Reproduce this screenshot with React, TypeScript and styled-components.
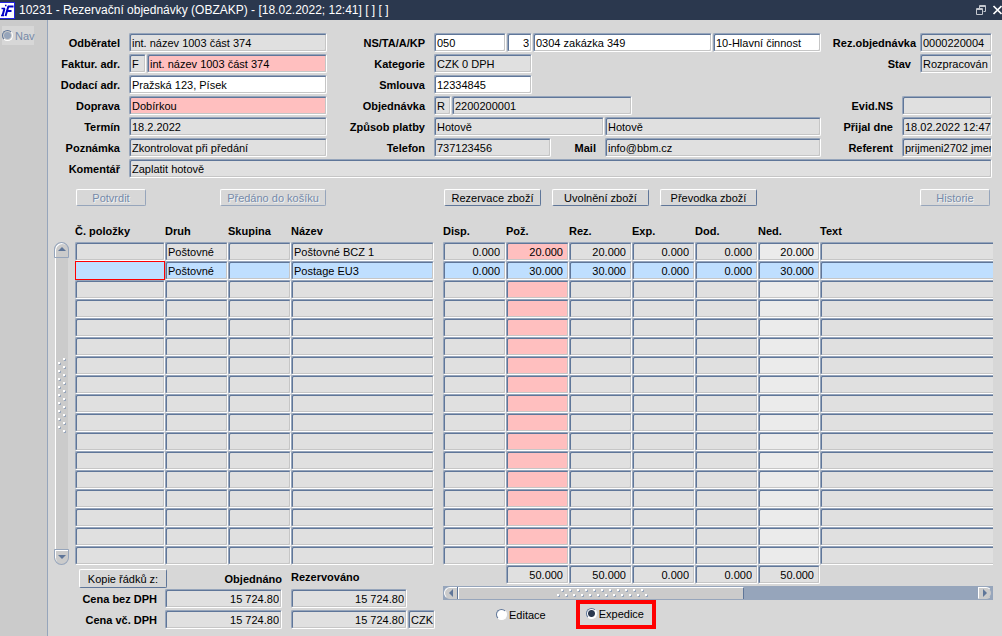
import React, { useState } from "react";
import styled, { createGlobalStyle, css } from "styled-components";

const color = {
  title: "#2b384e",
  nav: "#cbcbcb",
  panel: "#d7d7d7",
  field: "#e0e0e0",
  pale: "#ebebeb",
  pink: "#ffbfbf",
  selected: "#bfdfff",
  line: "#5f7699",
  lineSoft: "#96a5bb",
  shade: "#c6c6c6",
  disabled: "#768aa8",
};

const GlobalStyle = createGlobalStyle`
  *, *::before, *::after { box-sizing: border-box; }
  html, body, #root { height: 100%; }
  body {
    margin: 0;
    background: ${color.panel};
    overflow: hidden;
  }
  body, input, button {
    font-family: "Liberation Sans", Arial, sans-serif;
    font-size: 11px;
    color: #000;
  }
`;

const Window = styled.div`
  min-height: 100%;
  display: flex;
  flex-direction: column;
`;

const TitleBar = styled.header`
  height: 20px;
  flex: none;
  display: flex;
  align-items: center;
  gap: 4px;
  background: ${color.title};
`;

const Title = styled.h1`
  margin: 0;
  flex: 1;
  font-size: 12px;
  font-weight: 400;
  line-height: 20px;
  color: #fff;
  white-space: pre;
`;

const WindowButton = styled.button`
  width: 10px;
  height: 18px;
  margin-left: 2px;
  padding: 0;
  border: 0;
  background: none;
  display: flex;
  align-items: center;
`;

const Main = styled.div`
  flex: 1;
  display: flex;
`;

const Nav = styled.nav`
  width: 48px;
  flex: none;
  padding: 6px 0 0 2px;
  background: ${color.nav};
  border-right: 1px solid ${color.lineSoft};
`;

const NavItem = styled.label`
  display: flex;
  align-items: center;
  gap: 2px;
  width: 32px;
  height: 19px;
  background: ${color.panel};
  color: ${color.disabled};
`;

const Radio = styled.input`
  appearance: none;
  flex: none;
  width: 11px;
  height: 11px;
  margin: 0;
  border: 1px solid;
  border-color: ${color.line} #fff #fff ${color.line};
  border-radius: 50%;
  background: #fff;

  &:checked {
    background: radial-gradient(circle, ${color.title} 0 3px, #fff 4px);
  }

  &:disabled {
    background: radial-gradient(circle, ${color.lineSoft} 0 3px, ${color.nav} 4px);
  }
`;

const Content = styled.main`
  flex: 1;
  min-width: 0;
  padding: 13px 9px 0 0;
`;

const Form = styled.form`
  display: grid;
  grid-template-columns: 279px minmax(0, 1fr) 171px;
  row-gap: 2px;
  margin-right: 1px;
`;

const Stack = styled.div`
  display: grid;
  grid-template-columns: minmax(0, 1fr);
  grid-auto-rows: 19px;
  row-gap: 2px;
`;

const FormRow = styled.div<{ $row?: number; $wide?: boolean }>`
  display: flex;
  gap: 1px;
  height: 19px;
  ${(p) => p.$row && `grid-row: ${p.$row};`}
  ${(p) => p.$wide && "grid-column: 1 / -1;"}
`;

const Label = styled.label<{ $width?: number; $tight?: boolean }>`
  ${(p) => (p.$width ? `width: ${p.$width}px; flex: none;` : "flex: 1;")}
  height: 19px;
  padding: 1px ${(p) => (p.$tight ? 3 : 8)}px 0 0;
  font-weight: 700;
  line-height: 19px;
  text-align: right;
  white-space: nowrap;
`;

const sunken = css`
  border: 1px solid;
  border-color: ${color.lineSoft} #fff #fff ${color.lineSoft};
  border-radius: 2px;
  box-shadow: inset 1px 1px 0 ${color.line}, inset -1px -1px 0 ${color.shade};
`;

const Field = styled.input<{
  $width?: number;
  $tone?: string;
  $right?: boolean;
}>`
  ${sunken}
  ${(p) => (p.$width ? `width: ${p.$width}px; flex: none;` : "flex: 1; width: 0;")}
  min-width: 0;
  height: 19px;
  padding: 0 ${(p) => (p.$right ? 2 : 0)}px 0 2px;
  background: ${(p) => p.$tone ?? color.field};
  text-align: ${(p) => (p.$right ? "right" : "left")};
  outline: none;
`;

const Button = styled.button<{ $width: number; $tall?: boolean }>`
  width: ${(p) => p.$width}px;
  height: ${(p) => (p.$tall ? 19 : 17)}px;
  flex: none;
  padding: 1px 0 0;
  border: 1px solid;
  border-color: #fff ${color.line} ${color.line} #fff;
  border-radius: 2px;
  background: ${color.panel};
  line-height: 14px;
  white-space: nowrap;

  &:disabled {
    border-color: #fff ${color.lineSoft} ${color.lineSoft} #fff;
    color: ${color.disabled};
    text-shadow: 1px 1px 0 #eef2f6;
  }
`;

const Actions = styled.div`
  display: grid;
  grid-template-columns: 250px minmax(0, 1fr) 70px;
  column-gap: 118px;
  margin: 11px 3px 0 28px;
`;

const ActionGroup = styled.div<{ $spread?: boolean }>`
  display: flex;
  gap: 11px;
  ${(p) => p.$spread && "justify-content: space-between;"}
`;

const Panes = styled.div`
  display: flex;
  margin-top: 17px;
`;

const LeftPane = styled.section`
  width: 359px;
  flex: none;
  margin: 0 9px 0 6px;
`;

const RightPane = styled.section`
  flex: 1;
  min-width: 0;
  overflow: hidden;
`;

const VerticalBar = styled.div`
  width: 15px;
  height: 323px;
  flex: none;
  margin: 19px 0 0 6px;
  display: flex;
  flex-direction: column;
  align-items: center;
`;

const Cap = styled.button<{ $end?: boolean }>`
  width: 15px;
  height: 16px;
  flex: none;
  padding: 0;
  display: flex;
  align-items: center;
  justify-content: center;
  border: 1px solid ${color.lineSoft};
  border-radius: ${(p) => (p.$end ? "1px 1px 8px 8px" : "8px 8px 1px 1px")};
  box-shadow: inset 1px 1px 0 #fff;
  background: ${color.nav};
`;

const VerticalThumb = styled.div`
  flex: 1;
  width: 13px;
  padding-bottom: 16px;
  display: flex;
  align-items: center;
  justify-content: center;
  border-left: 1px solid #fff;
  background: ${color.nav};
`;

const Grid = styled.table`
  width: 100%;
  table-layout: fixed;
  border-collapse: collapse;
`;

const HeadCell = styled.th`
  height: 19px;
  padding: 0;
  font-weight: 700;
  line-height: 16px;
  text-align: left;
  vertical-align: top;
  white-space: nowrap;
`;

const Cell = styled.td`
  height: 19px;
  padding: 0;
`;

const CellInput = styled.input<{
  $tone: string;
  $right?: boolean;
  $current?: boolean;
  $open?: boolean;
}>`
  ${sunken}
  display: block;
  width: 100%;
  height: 19px;
  padding: 0 ${(p) => (p.$right ? 5 : 2)}px 0 2px;
  background: ${(p) => p.$tone};
  text-align: ${(p) => (p.$right ? "right" : "left")};
  outline: none;
  ${(p) =>
    p.$open &&
    css`
      border-right: 0;
      border-radius: 2px 0 0 2px;
      box-shadow: inset 1px 1px 0 ${color.line}, inset 0 -1px 0 ${color.shade};
    `}
  ${(p) =>
    p.$current &&
    css`
      border-color: #f00;
      border-radius: 0;
      box-shadow: none;
    `}
`;

const Summary = styled.div`
  display: grid;
  grid-template-columns: 90px 117px 143px;
  row-gap: 2px;

  & > :nth-child(3n) {
    margin-left: 9px;
    margin-right: -9px;
  }
`;

const SummaryHead = styled.div<{ $right?: boolean }>`
  padding-top: ${(p) => (p.$right ? 6 : 4)}px;
  font-weight: 700;
  line-height: 16px;
  text-align: ${(p) => (p.$right ? "right" : "left")};
`;

const SummaryLine = styled.div`
  display: flex;
  gap: 1px;
`;

const CopyButtonSlot = styled.div`
  height: 22px;
  padding: 4px 0 0 4px;
`;

const HorizontalBar = styled.div`
  display: flex;
  height: 14px;
  margin-top: 2px;
  border: 1px solid ${color.lineSoft};
  background: ${color.lineSoft};
`;

const SideCap = styled.button<{ $end?: boolean }>`
  width: 14px;
  flex: none;
  padding: 0;
  display: flex;
  align-items: center;
  justify-content: center;
  border: 1px solid #fff;
  border-right-color: ${(p) => (p.$end ? color.lineSoft : color.nav)};
  border-bottom-color: ${color.nav};
  border-radius: ${(p) => (p.$end ? "0 7px 7px 0" : "7px 0 0 7px")};
  background: ${color.nav};
`;

const Track = styled.div`
  flex: 1;
`;

const HorizontalThumb = styled.div`
  width: 55%;
  height: 12px;
  padding-left: 4px;
  display: flex;
  align-items: center;
  justify-content: center;
  border: 1px solid #fff;
  border-right-color: ${color.line};
  border-bottom: 0;
  box-shadow: -1px 0 0 ${color.line};
  background: ${color.nav};
`;

const Modes = styled.div`
  display: flex;
  align-items: center;
  gap: 30px;
  margin-left: 53px;
`;

const Mode = styled.label`
  display: flex;
  align-items: center;
  gap: 2px;
  line-height: 16px;
`;

const Highlight = styled.div`
  display: flex;
  align-items: center;
  width: 80px;
  height: 29px;
  padding: 0 0 2px 6px;
  border: 4px solid #f00;
`;

function Logo() {
  return (
    <svg width="15" height="17" viewBox="0 0 15 17" aria-hidden="true">
      <rect width="15" height="17" fill="#fff" />
      <path d="M0 .5H15M14.5 0V17M0 16.5H15" stroke="#2424e0" fill="none" />
      <path d="M4.5 6.5L2.5 13.5" stroke="#0000c8" strokeWidth="2" />
      <path d="M1.5 6.5H5M1 13.5H4M5 3.5H6.5" stroke="#0000c8" strokeWidth="1.5" />
      <path d="M8.5 4L5.5 14M8 4.5H13.5M7 9H11.5" stroke="#0000c8" strokeWidth="2" fill="none" />
    </svg>
  );
}

function RestoreIcon() {
  return (
    <svg width="10" height="10" viewBox="0 0 10 10" aria-hidden="true">
      <path d="M3.5 3V.5H9.5V6.5H7.5M3 1.5H10" stroke="#c3c7ce" fill="none" />
      <path d="M.5 3.5H6.5V9.5H.5ZM0 4.5H7" stroke="#c3c7ce" fill="none" />
    </svg>
  );
}

function CloseIcon() {
  return (
    <svg width="10" height="10" viewBox="0 0 10 10" aria-hidden="true">
      <path d="M1.5 1L9.5 9M9.5 1L1.5 9" stroke="#fff" strokeWidth="1.7" />
    </svg>
  );
}

const arrows = {
  up: "M0 5L4 1L8 5Z",
  down: "M0 2L4 6L8 2Z",
  left: "M6 0L2 4L6 8Z",
  right: "M2 0L6 4L2 8Z",
};

function Arrow({ to }: { to: keyof typeof arrows }) {
  return (
    <svg width="8" height="8" viewBox="0 0 8 8" aria-hidden="true">
      <path d={arrows[to]} fill={color.line} />
    </svg>
  );
}

function Grip({ vertical }: { vertical?: boolean }) {
  const dots = Array.from({ length: vertical ? 19 : 23 }, (_, i) => {
    const along = i * 4;
    const across = i % 2 ? 0 : 5;
    return vertical ? [across, along] : [along, across];
  });
  return (
    <svg width={vertical ? 9 : 92} height={vertical ? 76 : 9} aria-hidden="true">
      {dots.map(([x, y]) => (
        <g key={`${x}-${y}`}>
          <rect x={x + 1} y={y + 1} width="2" height="2" fill={color.lineSoft} />
          <rect x={x} y={y} width="2" height="2" fill="#fff" />
        </g>
      ))}
    </svg>
  );
}

type Column = { key: string; title: string; width?: number; right?: boolean; tone?: string };

const leftColumns: Column[] = [
  { key: "no", title: "Č. položky", width: 90 },
  { key: "kind", title: "Druh", width: 63 },
  { key: "group", title: "Skupina", width: 63 },
  { key: "name", title: "Název", width: 143 },
];

const rightColumns: Column[] = [
  { key: "disp", title: "Disp.", width: 63, right: true },
  { key: "poz", title: "Pož.", width: 63, right: true, tone: color.pink },
  { key: "rez", title: "Rez.", width: 63, right: true },
  { key: "exp", title: "Exp.", width: 63, right: true },
  { key: "dod", title: "Dod.", width: 63, right: true },
  { key: "ned", title: "Ned.", width: 62, right: true, tone: color.pale },
  { key: "text", title: "Text" },
];

const items: Record<string, string>[] = [
  { kind: "Poštovné", name: "Poštovné BCZ 1", disp: "0.000", poz: "20.000", rez: "20.000", exp: "0.000", dod: "0.000", ned: "20.000" },
  { kind: "Poštovné", name: "Postage EU3", disp: "0.000", poz: "30.000", rez: "30.000", exp: "0.000", dod: "0.000", ned: "30.000" },
];

const totals: Record<string, string> = {
  poz: "50.000",
  rez: "50.000",
  exp: "0.000",
  dod: "0.000",
  ned: "50.000",
};

const ROWS = 17;
const SELECTED = 1;

function ItemGrid({ columns, withTotals }: { columns: Column[]; withTotals?: boolean }) {
  return (
    <Grid>
      <colgroup>
        {columns.map((c) => (
          <col key={c.key} width={c.width} />
        ))}
      </colgroup>
      <thead>
        <tr>
          {columns.map((c) => (
            <HeadCell key={c.key} scope="col">{c.title}</HeadCell>
          ))}
        </tr>
      </thead>
      <tbody>
        {Array.from({ length: ROWS }, (_, row) => (
          <tr key={row}>
            {columns.map((c) => (
              <Cell key={c.key}>
                <CellInput
                  aria-label={`${c.title} ${row + 1}`}
                  defaultValue={items[row]?.[c.key] ?? ""}
                  $tone={row === SELECTED ? color.selected : c.tone ?? color.field}
                  $right={c.right}
                  $open={!c.width}
                  $current={row === SELECTED && c.key === "no"}
                />
              </Cell>
            ))}
          </tr>
        ))}
      </tbody>
      {withTotals && (
        <tfoot>
          <tr>
            {columns.map((c) => (
              <Cell key={c.key}>
                {totals[c.key] && (
                  <CellInput
                    readOnly
                    aria-label={`${c.title} celkem`}
                    value={totals[c.key]}
                    $tone={color.field}
                    $right
                  />
                )}
              </Cell>
            ))}
          </tr>
        </tfoot>
      )}
    </Grid>
  );
}

type LineProps = { id: string; label: string; value: string; tone?: string };

function CustomerLine({ id, label, value, tone, code }: LineProps & { code?: string }) {
  return (
    <FormRow>
      <Label htmlFor={id} $width={80}>{label}</Label>
      {code && <Field aria-label={`${label} typ`} defaultValue={code} $width={17} />}
      <Field id={id} defaultValue={value} $tone={tone} />
    </FormRow>
  );
}

function StatusLine({ id, label, value, row, width, tight }: LineProps & { row: number; width: number; tight?: boolean }) {
  return (
    <FormRow $row={row}>
      <Label htmlFor={id} $tight={tight}>{label}</Label>
      <Field id={id} defaultValue={value} $width={width} />
    </FormRow>
  );
}

export default function App() {
  const [mode, setMode] = useState("expedice");
  return (
    <Window>
      <GlobalStyle />
      <TitleBar>
        <Logo />
        <Title>10231 - Rezervační objednávky (OBZAKP) - [18.02.2022; 12:41] [ ] [ ]</Title>
        <WindowButton aria-label="Obnovit"><RestoreIcon /></WindowButton>
        <WindowButton aria-label="Zavřít"><CloseIcon /></WindowButton>
      </TitleBar>
      <Main>
        <Nav>
          <NavItem>
            <Radio type="radio" name="nav" disabled />
            Nav
          </NavItem>
        </Nav>
        <Content>
          <Form>
            <Stack>
              <CustomerLine id="odberatel" label="Odběratel" value="int. název 1003 část 374" />
              <CustomerLine id="faktur" label="Faktur. adr." code="F" value="int. název 1003 část 374" tone={color.pink} />
              <CustomerLine id="dodaci" label="Dodací adr." value="Pražská 123, Písek" tone="#fff" />
              <CustomerLine id="doprava" label="Doprava" value="Dobírkou" tone={color.pink} />
              <CustomerLine id="termin" label="Termín" value="18.2.2022" />
              <CustomerLine id="poznamka" label="Poznámka" value="Zkontrolovat při předání" />
            </Stack>
            <Stack>
              <FormRow>
                <Label htmlFor="ns" $width={106}>NS/TA/A/KP</Label>
                <Field id="ns" defaultValue="050" $tone="#fff" $width={72} />
                <Field aria-label="TA" defaultValue="3" $tone="#fff" $width={25} $right />
                <Field aria-label="A" defaultValue="0304 zakázka 349" $tone="#fff" />
                <Field aria-label="KP" defaultValue="10-Hlavní činnost" $tone="#fff" $width={108} />
              </FormRow>
              <FormRow>
                <Label htmlFor="kategorie" $width={106}>Kategorie</Label>
                <Field id="kategorie" defaultValue="CZK 0 DPH" $width={98} />
              </FormRow>
              <FormRow>
                <Label htmlFor="smlouva" $width={106}>Smlouva</Label>
                <Field id="smlouva" defaultValue="12334845" $tone="#fff" $width={98} />
              </FormRow>
              <FormRow>
                <Label htmlFor="objednavka" $width={106}>Objednávka</Label>
                <Field aria-label="Řada objednávky" defaultValue="R" $width={17} />
                <Field id="objednavka" defaultValue="2200200001" $width={180} />
              </FormRow>
              <FormRow>
                <Label htmlFor="platba" $width={106}>Způsob platby</Label>
                <Field id="platba" defaultValue="Hotově" />
                <Field aria-label="Popis platby" defaultValue="Hotově" $width={216} />
              </FormRow>
              <FormRow>
                <Label htmlFor="telefon" $width={106}>Telefon</Label>
                <Field id="telefon" defaultValue="737123456" $width={117} />
                <Label htmlFor="mail">Mail</Label>
                <Field id="mail" defaultValue="info@bbm.cz" $width={216} />
              </FormRow>
            </Stack>
            <Stack>
              <StatusLine id="rez" label="Rez.objednávka" value="0000220004" row={1} width={72} tight />
              <StatusLine id="stav" label="Stav" value="Rozpracován" row={2} width={72} />
              <StatusLine id="evid" label="Evid.NS" value="" row={4} width={90} />
              <StatusLine id="prijal" label="Přijal dne" value="18.02.2022 12:47" row={5} width={90} />
              <StatusLine id="referent" label="Referent" value="prijmeni2702 jmen" row={6} width={90} />
            </Stack>
            <FormRow $wide>
              <Label htmlFor="komentar" $width={80}>Komentář</Label>
              <Field id="komentar" defaultValue="Zaplatit hotově" />
            </FormRow>
          </Form>

          <Actions>
            <ActionGroup $spread>
              <Button disabled $width={70}>Potvrdit</Button>
              <Button disabled $width={106}>Předáno do košíku</Button>
            </ActionGroup>
            <ActionGroup>
              <Button $width={97}>Rezervace zboží</Button>
              <Button $width={97}>Uvolnění zboží</Button>
              <Button $width={97}>Převodka zboží</Button>
            </ActionGroup>
            <Button disabled $width={70}>Historie</Button>
          </Actions>

          <Panes>
            <VerticalBar>
              <Cap aria-label="Nahoru"><Arrow to="up" /></Cap>
              <VerticalThumb><Grip vertical /></VerticalThumb>
              <Cap aria-label="Dolů" $end><Arrow to="down" /></Cap>
            </VerticalBar>
            <LeftPane>
              <ItemGrid columns={leftColumns} />
              <Summary>
                <CopyButtonSlot>
                  <Button $width={88} $tall>Kopie řádků z:</Button>
                </CopyButtonSlot>
                <SummaryHead $right>Objednáno</SummaryHead>
                <SummaryHead>Rezervováno</SummaryHead>

                <Label htmlFor="bez1">Cena bez DPH</Label>
                <SummaryLine><Field id="bez1" readOnly value="15 724.80" $right /></SummaryLine>
                <SummaryLine><Field aria-label="Rezervováno bez DPH" readOnly value="15 724.80" $width={116} $right /></SummaryLine>

                <Label htmlFor="vc1">Cena vč. DPH</Label>
                <SummaryLine><Field id="vc1" readOnly value="15 724.80" $right /></SummaryLine>
                <SummaryLine>
                  <Field aria-label="Rezervováno vč. DPH" readOnly value="15 724.80" $width={116} $right />
                  <Field aria-label="Měna" readOnly value="CZK" $width={27} />
                </SummaryLine>
              </Summary>
            </LeftPane>
            <RightPane>
              <ItemGrid columns={rightColumns} withTotals />
              <HorizontalBar>
                <SideCap aria-label="Vlevo"><Arrow to="left" /></SideCap>
                <Track>
                  <HorizontalThumb><Grip /></HorizontalThumb>
                </Track>
                <SideCap aria-label="Vpravo" $end><Arrow to="right" /></SideCap>
              </HorizontalBar>
              <Modes>
                <Mode>
                  <Radio type="radio" name="mode" checked={mode === "editace"} onChange={() => setMode("editace")} />
                  Editace
                </Mode>
                <Highlight>
                  <Mode>
                    <Radio type="radio" name="mode" checked={mode === "expedice"} onChange={() => setMode("expedice")} />
                    Expedice
                  </Mode>
                </Highlight>
              </Modes>
            </RightPane>
          </Panes>
        </Content>
      </Main>
    </Window>
  );
}
